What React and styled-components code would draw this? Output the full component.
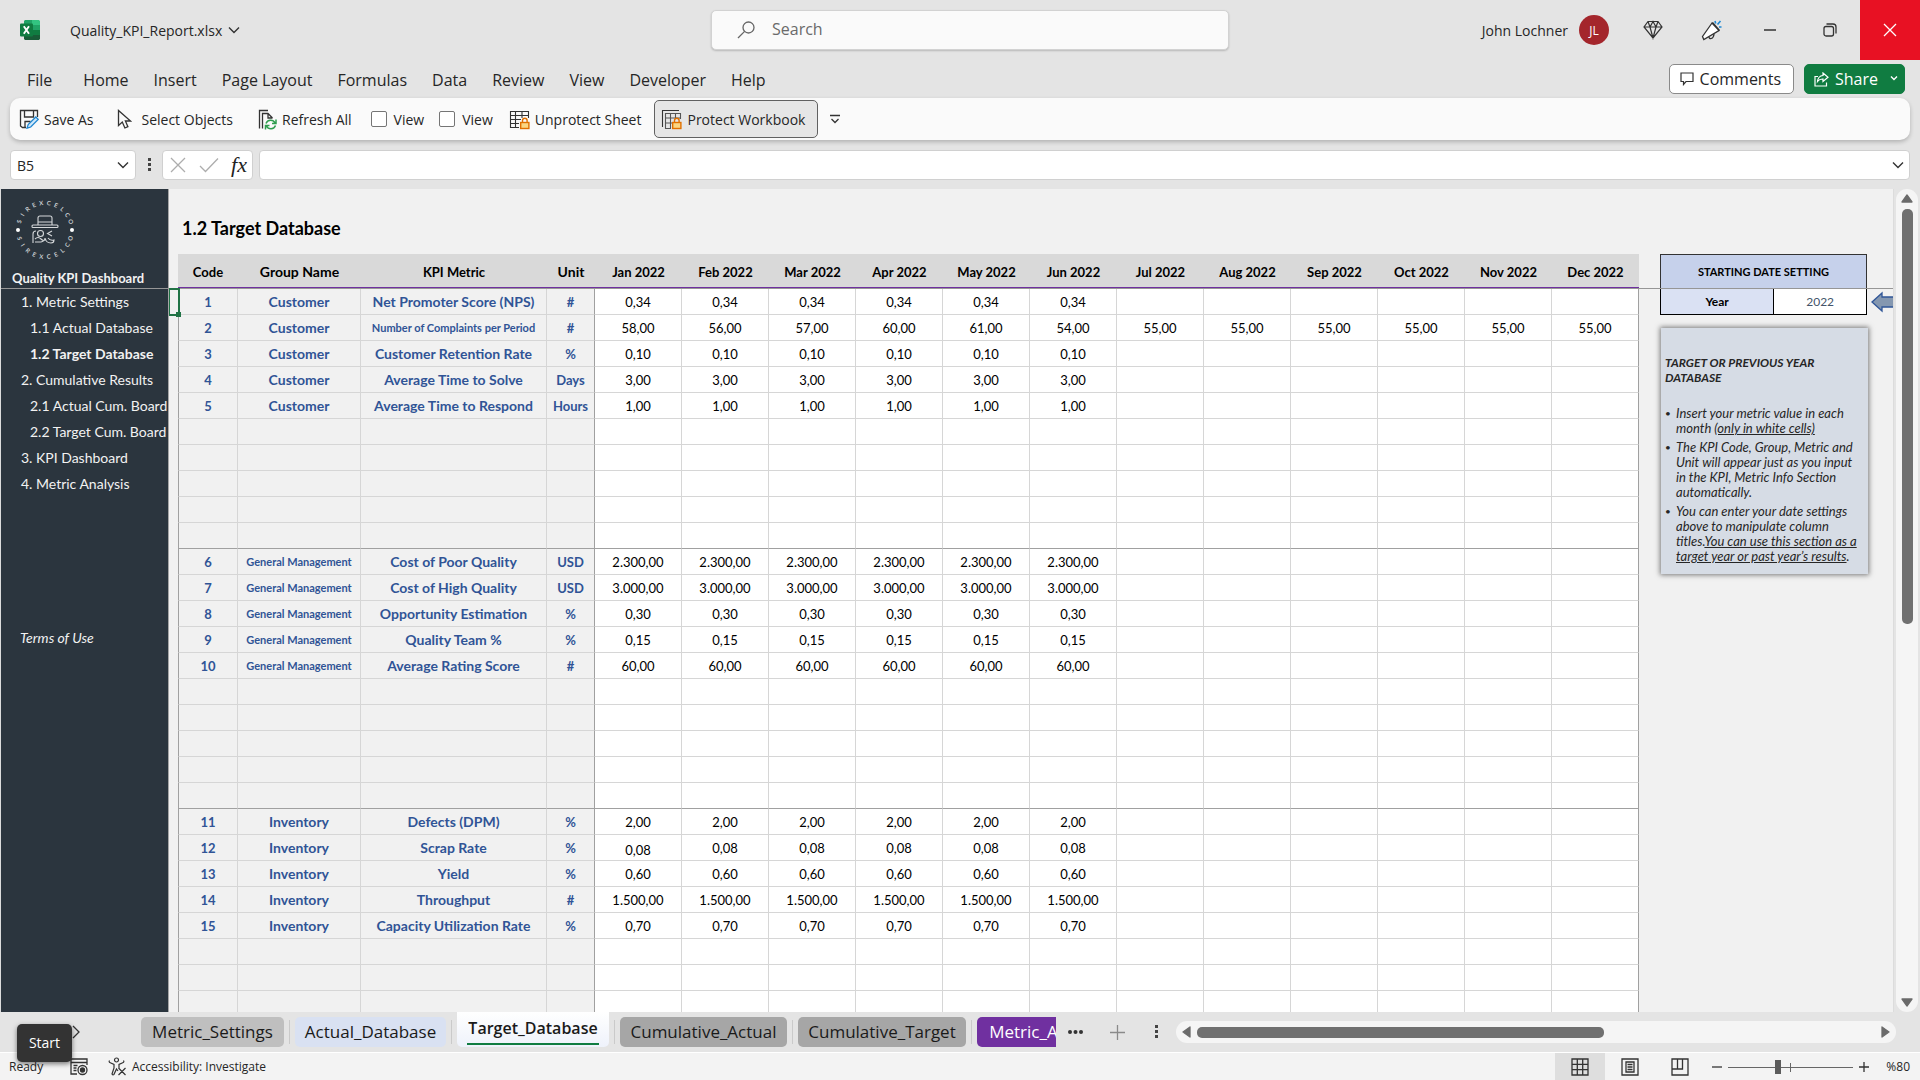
import React from "react";
import styled, { createGlobalStyle, css } from "styled-components";

const GlobalStyle = createGlobalStyle`
  * {
    box-sizing: border-box;
  }
  body {
    margin: 0;
    background: #e4e4e4;
    color: #262626;
    font-family: "Open Sans", "Noto Sans", sans-serif;
    font-size: 14px;
  }
  button, input, select {
    font: inherit;
    color: inherit;
  }
  button {
    border: 0;
    padding: 0;
    background: none;
  }
  a {
    color: inherit;
    text-decoration: none;
  }
`;

const Window = styled.div`
  display: flex;
  flex-direction: column;
  height: 100vh;
  overflow: hidden;
`;

/* ---------- title bar ---------- */

const TitleBar = styled.header`
  display: grid;
  grid-template-columns: 1fr 518px 1fr;
  height: 60px;
  flex: none;
  padding-left: 20px;
`;
const TitleLeft = styled.div`
  display: flex;
  align-items: center;
  gap: 30px;
`;
const FileButton = styled.button`
  display: flex;
  align-items: center;
  gap: 6px;
`;
const SearchBox = styled.label`
  display: flex;
  align-items: center;
  align-self: center;
  gap: 15px;
  height: 40px;
  padding: 0 25px;
  background: #fafafa;
  border: 1px solid #d2d2d2;
  border-radius: 5px;
  box-shadow: 0 1px 2px rgba(0, 0, 0, 0.2);
`;
const SearchInput = styled.input`
  flex: 1;
  min-width: 0;
  padding: 0 2px 2px;
  border: 0;
  outline: 0;
  background: none;
  font-size: 16px;
  &::placeholder {
    color: #6a6a6a;
    opacity: 1;
  }
`;
const TitleRight = styled.div`
  display: flex;
  align-items: center;
  justify-content: flex-end;
`;
const Avatar = styled.span`
  display: flex;
  align-items: center;
  justify-content: center;
  width: 30px;
  height: 30px;
  margin: 0 15px 0 11px;
  border-radius: 50%;
  background: #a4262c;
  color: #fff;
  font-size: 12px;
`;
const WindowButton = styled.button`
  display: flex;
  align-items: center;
  justify-content: center;
  width: ${p => p.$width || 60}px;
  height: 60px;
  ${p =>
    p.$close &&
    css`
      background: #e81123;
    `}
`;

/* ---------- ribbon ---------- */

const MenuBar = styled.nav`
  display: flex;
  align-items: center;
  height: 38px;
  flex: none;
  padding: 0 15px 0 27px;
`;
const MenuLink = styled.a`
  margin-right: ${p => (p.$first ? 31 : 25)}px;
  padding-top: 2px;
  font-size: 16px;
`;
const MenuActions = styled.div`
  display: flex;
  gap: 10px;
  margin-left: auto;
`;
const ActionButton = styled.button`
  display: flex;
  align-items: center;
  gap: 6px;
  height: 30px;
  padding: 0 12px 0 10px;
  border: 1px solid #8a8a8a;
  border-radius: 5px;
  background: #fff;
  font-size: 16px;
  ${p =>
    p.$primary &&
    css`
      padding: 0 6px 0 9px;
      border-color: #107c41;
      background: #107c41;
      color: #fff;
    `}
`;
const ActionText = styled.span`
  margin-right: ${p => (p.$wide ? 6 : 0)}px;
`;
const Ribbon = styled.div`
  display: flex;
  align-items: center;
  height: 42px;
  flex: none;
  margin: 0 10px;
  padding-left: 9px;
  border-radius: 10px;
  background: #fafafa;
  box-shadow: 0 2px 4px rgba(0, 0, 0, 0.22);
`;
const Tool = styled.button`
  display: flex;
  align-items: center;
  gap: ${p => p.$gap || 5}px;
  margin-right: ${p => p.$after || 0}px;
`;
const CheckTool = styled.label`
  display: flex;
  align-items: center;
  gap: 7px;
  margin-right: ${p => p.$after}px;
`;
const CheckBox = styled.input`
  appearance: none;
  width: 16px;
  height: 16px;
  margin: 0;
  border: 1px solid #757575;
  border-radius: 2px;
  background: #fff;
`;
const ActiveTool = styled(Tool)`
  height: 38px;
  padding: 0 12px 0 6px;
  border: 1px solid #616161;
  border-radius: 5px;
  background: #e6e6e6;
`;

/* ---------- formula bar ---------- */

const FormulaBar = styled.div`
  display: flex;
  height: 30px;
  flex: none;
  margin: 10px 10px 9px;
`;
const field = css`
  display: flex;
  align-items: center;
  border: 1px solid #d0d0d0;
  border-radius: 4px;
  background: #fff;
`;
const NameBox = styled.label`
  ${field}
  width: 126px;
  padding: 0 6px;
`;
const NameInput = styled.input`
  flex: 1;
  min-width: 0;
  padding: 0;
  border: 0;
  outline: 0;
  background: none;
`;
const Dots = styled.div`
  display: flex;
  align-items: center;
  justify-content: center;
  width: 26px;
`;
const FormulaTools = styled.div`
  ${field}
  width: 91px;
  justify-content: space-between;
  padding: 0 5px 0 7px;
`;
const Fx = styled.button`
  font-family: "Liberation Serif", serif;
  font-style: italic;
  font-size: 22px;
  line-height: 24px;
  color: #222;
`;
const FormulaField = styled.label`
  ${field}
  flex: 1;
  margin-left: 6px;
  padding: 0 5px 0 8px;
`;

/* ---------- sheet ---------- */

const Workspace = styled.div`
  display: flex;
  flex: 1;
  min-height: 0;
`;
const Sheet = styled.main`
  position: relative;
  display: flex;
  flex: 1;
  min-width: 0;
  overflow: hidden;
  border: solid #dcdcdc;
  border-width: 0 1px 0 1px;
  background: #f1f1f1;
  font-family: Lato, Carlito, sans-serif;
  font-size: 13px;
`;
/* marks the frozen rows, runs over every column */
const FreezeLine = styled.div`
  position: absolute;
  top: 99px;
  left: 0;
  right: 0;
  height: 1px;
  background: #969696;
`;
const Sidebar = styled.aside`
  width: 168px;
  flex: none;
  overflow: hidden;
  border-right: 1px solid #a6a6a6;
  background: #2b353e;
  color: #f2f2f2;
`;
const SidebarHead = styled.div`
  display: flex;
  flex-direction: column;
  justify-content: space-between;
  height: 100px;
  padding: 8px 0 1px 11px;
`;
const Brand = styled.strong`
  line-height: 20px;
`;
const SideLink = styled.a`
  display: block;
  padding-left: ${p => (p.$sub ? 29 : 20)}px;
  font-size: 14px;
  font-weight: ${p => (p.$current ? "bold" : "normal")};
  line-height: 26px;
  white-space: nowrap;
`;
const Terms = styled(SideLink)`
  margin-top: 128px;
  padding-left: 19px;
  font-style: italic;
`;
const Gutter = styled.div`
  width: 9px;
  flex: none;
`;
/* selection frame of cell B5, lies over its neighbours */
const Selection = styled.div`
  position: absolute;
  z-index: 1;
  top: 99px;
  left: 168px;
  width: 11px;
  height: 28px;
  border: 2px solid #217346;
  border-left-width: 1px;
  &::after {
    content: "";
    position: absolute;
    right: -3px;
    bottom: -3px;
    width: 5px;
    height: 5px;
    background: #217346;
  }
`;
const Content = styled.section`
  flex: 1;
  min-width: 0;
`;
const SheetTitle = styled.h1`
  height: 65px;
  margin: 0;
  padding: 29px 0 0 4px;
  color: #000;
  font-size: 18px;
  line-height: 20px;
`;
const Grid = styled.table`
  width: 100%;
  table-layout: fixed;
  border-spacing: 0;
  text-align: center;
`;
const HeadCell = styled.th`
  height: 35px;
  padding: 3px 0 0;
  border-bottom: 2px solid #7030a0;
  background: #d9d9d9;
  color: #000;
  line-height: 20px;
  font-size: ${p => (p.$wide ? 14 : 13)}px;
`;
const Cell = styled.td`
  height: 26px;
  padding: 0;
  border: solid #d6d6d6;
  border-width: 0 1px 1px 0;
  background: #fff;
  color: #000;
  line-height: 20px;
  vertical-align: ${p => (p.$low ? "bottom" : "middle")};
  ${p =>
    p.$info &&
    css`
      background: #f1f1f1;
      color: #305496;
      font-size: ${p.$size || 13}px;
      font-weight: bold;
    `}
  ${p =>
    p.$first &&
    css`
      border-left: 1px solid #a0a0a0;
    `}
  ${p =>
    p.$edge &&
    css`
      border-right-color: #a0a0a0;
    `}
  ${p =>
    p.$last &&
    css`
      border-bottom-color: #a0a0a0;
    `}
`;
const SidePanel = styled.aside`
  width: 207px;
  flex: none;
  margin: 65px 26px 0 21px;
`;
const DateTable = styled.table`
  width: 100%;
  table-layout: fixed;
  border-collapse: collapse;
  color: #000;
  font-size: 12px;
`;
const LabelCol = styled.col`
  width: 55%;
`;
const DateHead = styled.th`
  height: 34px;
  padding: 0;
  border: 1px solid #333;
  background: #c6d1eb;
  font-size: 11px;
`;
const DateLabel = styled.th`
  height: 26px;
  padding: 0;
  border: 1px solid #000;
  background: #dae1f3;
`;
const DateValue = styled.td`
  padding: 0;
  border: 1px solid #000;
  background: #fff;
  color: #44546a;
  text-align: center;
`;
const ArrowMark = styled.svg`
  position: absolute;
  top: 102px;
  right: 0;
`;
const Note = styled.div`
  margin: 13px -1px 0 1px;
  height: 246px;
  padding: 27px 7px 0 4px;
  background: #d6dce5;
  box-shadow: 0 0 5px 1px rgba(0, 0, 0, 0.5);
  color: #262626;
  font-size: 13px;
  font-style: italic;
  line-height: 15px;
`;
const NoteTitle = styled.h2`
  margin: 0 0 21px;
  font-size: 12px;
  line-height: 15px;
`;
const NoteList = styled.ul`
  display: flex;
  flex-direction: column;
  gap: 4px;
  margin: 0;
  padding: 0;
  list-style: none;
`;
const NoteItem = styled.li`
  display: flex;
  &::before {
    content: "•";
    width: 11px;
    flex: none;
    font-size: 10px;
  }
`;
const VScroll = styled.div`
  display: flex;
  flex-direction: column;
  align-items: center;
  width: 22px;
  flex: none;
  margin: 0 2px;
  padding: 5px 0;
  gap: 6px;
  border-radius: 11px;
  background: #f5f5f5;
`;
const VTrack = styled.div`
  flex: 1;
`;
const VThumb = styled.div`
  width: 11px;
  height: 53%;
  border-radius: 5px;
  background: #707070;
`;

/* ---------- sheet tabs ---------- */

const TabBar = styled.div`
  display: flex;
  align-items: center;
  height: 40px;
  flex: none;
  padding: 0 24px 0 141px;
  position: relative;
`;
const TabStrip = styled.div`
  display: flex;
  align-items: center;
  align-self: stretch;
  width: 915px;
  overflow: hidden;
`;
const SheetTab = styled.button`
  flex: none;
  width: ${p => p.$width}px;
  height: 30px;
  border-radius: 5px;
  background: ${p => p.$color};
  color: ${p => p.$text || "#1a1a1a"};
  font-size: 17px;
  line-height: 30px;
  text-align: center;
`;
const ActiveTab = styled(SheetTab)`
  align-self: flex-start;
  height: 35px;
  padding: 0 10px;
  border-radius: 0 0 5px 5px;
  background: linear-gradient(#fff, #eef2fb);
  font-size: 16px;
  font-weight: 600;
`;
const ActiveLabel = styled.span`
  display: block;
  border-bottom: 2px solid #107c41;
  line-height: 29px;
`;
const TabGap = styled.span`
  width: 1px;
  height: 24px;
  flex: none;
  margin: 0 5px;
  background: #cacaca;
`;
const TabTools = styled.div`
  display: flex;
  align-items: center;
  justify-content: space-between;
  width: 92px;
  margin: 0 16px 0 12px;
`;
const HScroll = styled.div`
  display: flex;
  align-items: center;
  gap: 6px;
  flex: 1;
  height: 22px;
  padding: 0 6px;
  border-radius: 11px;
  background: #f5f5f5;
`;
const HTrack = styled.div`
  flex: 1;
`;
const HThumb = styled.div`
  width: 60%;
  height: 11px;
  border-radius: 5px;
  background: #707070;
`;
const NextSheet = styled.button`
  position: absolute;
  left: 72px;
  top: 12px;
`;
const StartTip = styled.div`
  position: absolute;
  z-index: 1;
  left: 17px;
  top: 12px;
  width: 55px;
  height: 38px;
  border-radius: 5px;
  background: #333;
  box-shadow: 0 2px 5px rgba(0, 0, 0, 0.5);
  color: #fff;
  line-height: 37px;
  text-align: center;
`;

/* ---------- status bar ---------- */

const StatusBar = styled.footer`
  display: flex;
  align-items: center;
  height: 28px;
  flex: none;
  padding: 0 10px 0 9px;
  border-top: 1px solid #fff;
  background: #f3f3f3;
  font-size: 12px;
`;
const StatusText = styled.span`
  width: 61px;
`;
const StatusButton = styled.button`
  display: flex;
  align-items: center;
  gap: 5px;
  margin-right: 20px;
`;
const Views = styled.div`
  display: flex;
  align-self: stretch;
  margin-left: auto;
`;
const ViewButton = styled.button`
  display: flex;
  align-items: center;
  justify-content: center;
  width: 50px;
  background: ${p => (p.$active ? "#dedede" : "none")};
`;
const Zoom = styled.div`
  display: flex;
  align-items: center;
  gap: 6px;
  margin-left: 7px;
`;
const ZoomSlider = styled.input`
  appearance: none;
  width: 125px;
  height: 16px;
  margin: 0;
  background: linear-gradient(#666, #666) 62px 4px / 1px 9px no-repeat,
    linear-gradient(#666, #666) 0 8px / 100% 1px no-repeat;
  &::-webkit-slider-thumb {
    appearance: none;
    width: 6px;
    height: 14px;
    background: #5c5c5c;
  }
`;
const ZoomValue = styled.span`
  margin-left: 11px;
`;

/* ---------- icons ---------- */

const Icon = ({ size = 20, w = size, h = size, children, ...rest }) => (
  <svg
    width={w}
    height={h}
    viewBox={`0 0 ${w} ${h}`}
    fill="none"
    stroke="#333"
    strokeWidth="1.3"
    {...rest}
  >
    {children}
  </svg>
);

const Chevron = ({ w = 12, color = "#333" }) => (
  <Icon w={w} h={8} stroke={color} strokeWidth="1.4">
    <path d={`M1 1.5 L${w / 2} ${w / 2 + 0.5} L${w - 1} 1.5`} />
  </Icon>
);

const ExcelIcon = () => (
  <Icon size={20} stroke="none">
    <path d="M5 0h8v5H4V1z" fill="#21a366" />
    <path d="M12 0h7l1 1v4h-8z" fill="#33c481" />
    <path d="M4 5h8v5H4z" fill="#107c41" />
    <path d="M12 5h8v5h-8z" fill="#21a366" />
    <path d="M4 10h8v5H4z" fill="#185c37" />
    <path d="M12 10h8v5h-8z" fill="#107c41" />
    <path d="M4 15h16v4l-1 1H5l-1-1z" fill="#185c37" />
    <rect y="3.5" width="13" height="13" rx="1" fill="#107c41" />
    <path d="M3.8 6.3 9 13.7M9 6.3l-5.2 7.4" stroke="#fff" strokeWidth="1.9" />
  </Icon>
);

const SearchIcon = () => (
  <Icon size={18} stroke="#666" strokeWidth="1.3">
    <circle cx="11.5" cy="6.5" r="5.5" />
    <path d="M7.6 10.4 1 17" />
  </Icon>
);

const DiamondIcon = () => (
  <Icon size={20} strokeWidth="1.2">
    <path d="M5 1.5h10l4 5.5-9 11L1 7zM1 7h18M5 1.5 7 7l3 11 3-11 2-5.5M7 7l3-5.5L13 7" />
  </Icon>
);

const MegaphoneIcon = () => (
  <Icon size={21}>
    <path d="M11 3 1.5 16.5l1.3 3L18 10.5zM11.5 2.5l7 8" fill="#fff" />
    <path d="M8 17c0 2.5 4.5 2.5 5-3" />
    <path d="M14 1l.7 2.5M19.5 1 16.5 4.5M18 7h2.5" stroke="#1e88d2" strokeWidth="1.6" />
  </Icon>
);

const SaveAsIcon = () => (
  <Icon size={20}>
    <path d="M18.5 8V1.5h-17V17l2 1.5H7M5.5 1.5V8h9V1.5M6 18v-5.5h5.5" />
    <path d="M8 19.2l1.2-3.7L16.8 8l2.4 2.4-7.5 7.6z" fill="#cfe8fa" stroke="#1f86d0" />
  </Icon>
);

const PointerIcon = () => (
  <Icon w={15} h={20}>
    <path d="M1.5 1.5v15l3.8-3.5 2.6 6 3-1.3L8.4 12H13.5z" />
  </Icon>
);

const RefreshIcon = () => (
  <Icon w={19} h={21}>
    <path d="M1.5 19.5v-18H10M4.5 19.5v-15H10l4.5 4.5M10 4.5V9h4.5" />
    <path
      d="M8 14.5c1.5-4 7-4.5 9-.5M18 10.5v4h-4M17.5 16.5c-1.500 4-7 4.500-9 .5M7.500 20.500v-4h4"
      stroke="#2f9e4f"
      strokeWidth="1.5"
    />
  </Icon>
);

const LockBadge = () => (
  <g stroke="#e07000" strokeWidth="1.4">
    <path d="M13.5 13.5v-2a2.3 2.3 0 0 1 4.6 0v2" />
    <rect x="11.7" y="13.5" width="8.2" height="6" fill="#fbd682" />
  </g>
);

const SheetLockIcon = () => (
  <Icon size={21} strokeWidth="1.1">
    <path d="M10 18.5H1.5v-16h18V9M1.5 6.5h18M1.5 10.5H12M1.5 14.5H10M6.5 2.5v16M13 2.5V9" />
    <LockBadge />
  </Icon>
);

const BookLockIcon = () => (
  <Icon size={21} strokeWidth="1.1">
    <path d="M1.5 18V1.5H18" />
    <path d="M10 19.5H4.5v-15h15V10M4.5 9h15M4.5 14H11M9.5 4.5v15M14.5 4.5V9" stroke="#555" />
    <LockBadge />
  </Icon>
);

const LOGO_NAME = "SIREXCELCO";

const Logo = () => {
  const letters = side =>
    LOGO_NAME.split("").map((letter, i) => {
      const turn = (-72 + i * 16) * side;
      return (
        <text
          key={side + "-" + i}
          y={side > 0 ? -25 : 29}
          transform={`rotate(${turn})`}
          textAnchor="middle"
        >
          {letter}
        </text>
      );
    });

  return (
    <svg
      width="66"
      height="66"
      viewBox="-33 -33 66 66"
      fill="#c9cdd0"
      fontFamily="Lato, sans-serif"
      fontSize="6"
      fontWeight="bold"
      role="img"
      aria-label="Sirexcelco"
    >
      {letters(1)}
      {letters(-1)}
      <circle cx="-27" cy="0" r="2" fill="#fff" />
      <circle cx="27" cy="0" r="2" fill="#fff" />
      <g fill="none" stroke="#d5d8da" strokeWidth="1.1">
        <path d="M-7-5v-7q0-2 2-2h10q2 0 2 2v7M-7-8H7" />
        <rect x="-13" y="-5" width="26" height="2.5" rx="1" />
        <circle cx="-4.5" cy="3.5" r="3" />
        <path d="M-12 13V4q0-3 3-3M7 1 2.5 3.5 7 6M-10 9q3-3 6 0t5 0M-10 12h6q4-1 4-4 1 5 6 5 3 0 3-3-4 1-6-2" />
      </g>
    </svg>
  );
};

const Kebab = () => (
  <Icon w={8} h={16} stroke="none" fill="#444">
    <rect x="3" y="1" width="3" height="3" />
    <rect x="3" y="6" width="3" height="3" />
    <rect x="3" y="11" width="3" height="3" />
  </Icon>
);

const Triangle = ({ points, w, h }) => (
  <Icon w={w} h={h} stroke="#6b6b6b" strokeLinejoin="round" fill="#6b6b6b">
    <polygon points={points} />
  </Icon>
);

/* ---------- data ---------- */

const MENU = ["File", "Home", "Insert", "Page Layout", "Formulas", "Data", "Review", "View", "Developer", "Help"];

const LINKS = [
  { text: "1. Metric Settings" },
  { text: "1.1 Actual Database", sub: true },
  { text: "1.2 Target Database", sub: true, current: true },
  { text: "2. Cumulative Results" },
  { text: "2.1 Actual Cum. Board", sub: true },
  { text: "2.2 Target Cum. Board", sub: true },
  { text: "3. KPI Dashboard" },
  { text: "4. Metric Analysis" }
];

const MONTHS = ["Jan", "Feb", "Mar", "Apr", "May", "Jun", "Jul", "Aug", "Sep", "Oct", "Nov", "Dec"];
const ROWS_PER_GROUP = 10;

const half = value => Array(6).fill(value);

const GROUPS = [
  {
    name: "Customer",
    rows: [
      [1, "Net Promoter Score (NPS)", "#", half("0,34")],
      [
        2,
        "Number of Complaints per Period",
        "#",
        ["58,00", "56,00", "57,00", "60,00", "61,00", "54,00"].concat(half("55,00"))
      ],
      [3, "Customer Retention Rate", "%", half("0,10")],
      [4, "Average Time to Solve", "Days", half("3,00")],
      [5, "Average Time to Respond", "Hours", half("1,00")]
    ]
  },
  {
    name: "General Management",
    rows: [
      [6, "Cost of Poor Quality", "USD", half("2.300,00")],
      [7, "Cost of High Quality", "USD", half("3.000,00")],
      [8, "Opportunity Estimation", "%", half("0,30")],
      [9, "Quality Team %", "%", half("0,15")],
      [10, "Average Rating Score", "#", half("60,00")]
    ]
  },
  {
    name: "Inventory",
    rows: [
      [11, "Defects (DPM)", "%", half("2,00")],
      [12, "Scrap Rate", "%", half("0,08")],
      [13, "Yield", "%", half("0,60")],
      [14, "Throughput", "#", half("1.500,00")],
      [15, "Capacity Utilization Rate", "%", half("0,70")]
    ]
  }
];

const MetricRow = ({ group, row, last }) => {
  const [code, metric, unit, values] = row || ["", "", "", []];
  return (
    <tr>
      <Cell $info $first $last={last}>{code}</Cell>
      <Cell $info $last={last} $size={group.length > 12 ? 11 : 14}>{row ? group : ""}</Cell>
      <Cell $info $last={last} $size={metric.length > 26 ? 11 : 14}>{metric}</Cell>
      <Cell $info $edge $last={last}>{unit}</Cell>
      {MONTHS.map((month, i) => (
        <Cell key={month} $last={last} $edge={i === 11} $low={code === 12 && i === 0}>
          {values[i]}
        </Cell>
      ))}
    </tr>
  );
};

const MetricTable = () => (
  <Grid>
    <colgroup>
      <col style={{ width: "60px" }} />
      <col style={{ width: "123px" }} />
      <col style={{ width: "186px" }} />
      <col style={{ width: "48px" }} />
      {MONTHS.map(month => (
        <col key={month} />
      ))}
    </colgroup>
    <thead>
      <tr>
        <HeadCell>Code</HeadCell>
        <HeadCell $wide>Group Name</HeadCell>
        <HeadCell>KPI Metric</HeadCell>
        <HeadCell $wide>Unit</HeadCell>
        {MONTHS.map(month => (
          <HeadCell key={month}>{month} 2022</HeadCell>
        ))}
      </tr>
    </thead>
    <tbody>
      {GROUPS.map(group =>
        Array.from({ length: ROWS_PER_GROUP }, (_, i) => (
          <MetricRow
            key={group.name + i}
            group={group.name}
            row={group.rows[i]}
            last={i === ROWS_PER_GROUP - 1}
          />
        ))
      )}
    </tbody>
  </Grid>
);

const App = () => {
  return (
    <Window>
      <GlobalStyle />

      <TitleBar>
        <TitleLeft>
          <ExcelIcon />
          <FileButton>
            Quality_KPI_Report.xlsx
            <Chevron />
          </FileButton>
        </TitleLeft>
        <SearchBox>
          <SearchIcon />
          <SearchInput type="search" placeholder="Search" aria-label="Search" />
        </SearchBox>
        <TitleRight>
          <span>John Lochner</span>
          <Avatar>JL</Avatar>
          <WindowButton $width={58} aria-label="Premium"><DiamondIcon /></WindowButton>
          <WindowButton $width={58} aria-label="What's new"><MegaphoneIcon /></WindowButton>
          <WindowButton aria-label="Minimize">
            <Icon size={14}><path d="M1 7h12" strokeWidth="1.5" /></Icon>
          </WindowButton>
          <WindowButton aria-label="Restore">
            <Icon size={14}>
              <rect x="1" y="3.5" width="9.5" height="9.5" rx="2" />
              <path d="M3.5 1H10q3 0 3 3v6.5" />
            </Icon>
          </WindowButton>
          <WindowButton $close aria-label="Close">
            <Icon size={14} stroke="#fff"><path d="M1 1l12 12M13 1 1 13" /></Icon>
          </WindowButton>
        </TitleRight>
      </TitleBar>

      <MenuBar>
        {MENU.map((item, i) => (
          <MenuLink key={item} href="#" $first={i === 0}>{item}</MenuLink>
        ))}
        <MenuActions>
          <ActionButton>
            <Icon size={14} strokeWidth="1.2">
              <path d="M1 1h12v8.5H6L3.5 12.5V9.5H1z" />
            </Icon>
            <ActionText>Comments</ActionText>
          </ActionButton>
          <ActionButton $primary>
            <Icon size={15} stroke="#fff" strokeWidth="1.2">
              <path d="M4 4.5H1V14h11.5v-3.5M9 1l5 4.2L9 9.5V7Q5.5 6.8 3.5 9.5 4 4 9 3.5z" />
            </Icon>
            <ActionText $wide>Share</ActionText>
            <Chevron w={8} color="#fff" />
          </ActionButton>
        </MenuActions>
      </MenuBar>

      <Ribbon>
        <Tool $after={24}><SaveAsIcon />Save As</Tool>
        <Tool $gap={9} $after={25}><PointerIcon />Select Objects</Tool>
        <Tool $after={19}><RefreshIcon />Refresh All</Tool>
        <CheckTool $after={15}><CheckBox type="checkbox" />View</CheckTool>
        <CheckTool $after={16}><CheckBox type="checkbox" />View</CheckTool>
        <Tool $after={13}><SheetLockIcon />Unprotect Sheet</Tool>
        <ActiveTool $after={12}><BookLockIcon />Protect Workbook</ActiveTool>
        <Tool aria-label="Customize toolbar">
          <Icon size={10}><path d="M0 1.5h10M1.5 5 5 8.5 8.5 5" /></Icon>
        </Tool>
      </Ribbon>

      <FormulaBar>
        <NameBox>
          <NameInput defaultValue="B5" aria-label="Name box" />
          <Chevron />
        </NameBox>
        <Dots><Kebab /></Dots>
        <FormulaTools>
          <Icon size={16} stroke="#adadad"><path d="M1 1l14 14M15 1 1 15" /></Icon>
          <Icon w={20} h={16} stroke="#adadad"><path d="M1 9l5.5 5.5L19 1.5" /></Icon>
          <Fx>fx</Fx>
        </FormulaTools>
        <FormulaField>
          <NameInput aria-label="Formula" />
          <Chevron />
        </FormulaField>
      </FormulaBar>

      <Workspace>
        <Sheet>
          <Sidebar>
            <SidebarHead>
              <Logo />
              <Brand>Quality KPI Dashboard</Brand>
            </SidebarHead>
            {LINKS.map(link => (
              <SideLink key={link.text} href="#" $sub={link.sub} $current={link.current}>
                {link.text}
              </SideLink>
            ))}
            <Terms href="#">Terms of Use</Terms>
          </Sidebar>
          <Gutter />
          <Content>
            <SheetTitle>1.2 Target Database</SheetTitle>
            <MetricTable />
          </Content>
          <SidePanel>
            <DateTable>
              <colgroup>
                <LabelCol />
                <col />
              </colgroup>
              <thead>
                <tr><DateHead colSpan={2}>STARTING DATE SETTING</DateHead></tr>
              </thead>
              <tbody>
                <tr>
                  <DateLabel scope="row">Year</DateLabel>
                  <DateValue>2022</DateValue>
                </tr>
              </tbody>
            </DateTable>
            <Note>
              <NoteTitle>TARGET OR PREVIOUS YEAR DATABASE</NoteTitle>
              <NoteList>
                <NoteItem>
                  <span>
                    Insert your metric value in each month <u>(only in white cells)</u>
                  </span>
                </NoteItem>
                <NoteItem>
                  <span>
                    The KPI Code, Group, Metric and Unit will appear just as you input in
                    the KPI, Metric Info Section automatically.
                  </span>
                </NoteItem>
                <NoteItem>
                  <span>
                    You can enter your date settings above to manipulate column titles.
                    <u>You can use this section as a target year or past year’s results</u>.
                  </span>
                </NoteItem>
              </NoteList>
            </Note>
          </SidePanel>
          <FreezeLine />
          <Selection />
          <ArrowMark width="22" height="22" viewBox="0 0 22 22">
            <path d="M1 11 11 2v4h12v10H11v4z" fill="#8497b0" stroke="#2f5597" strokeWidth="1.3" />
          </ArrowMark>
        </Sheet>
        <VScroll>
          <Triangle w={12} h={9} points="6,1 11,8 1,8" />
          <VTrack><VThumb /></VTrack>
          <Triangle w={12} h={9} points="1,1 11,1 6,8" />
        </VScroll>
      </Workspace>

      <TabBar>
        <NextSheet aria-label="Next sheet">
          <Icon w={9} h={14}><path d="M1 1l6 6-6 6" /></Icon>
        </NextSheet>
        <StartTip role="tooltip">Start</StartTip>
        <TabStrip>
          <SheetTab $width={143} $color="#bfbfbf">Metric_Settings</SheetTab>
          <TabGap />
          <SheetTab $width={151} $color="#d9e1f2">Actual_Database</SheetTab>
          <TabGap />
          <ActiveTab $width={152}><ActiveLabel>Target_Database</ActiveLabel></ActiveTab>
          <TabGap />
          <SheetTab $width={167} $color="#a6a6a6">Cumulative_Actual</SheetTab>
          <TabGap />
          <SheetTab $width={168} $color="#a6a6a6">Cumulative_Target</SheetTab>
          <TabGap />
          <SheetTab $width={146} $color="#7030a0" $text="#fff">Metric_Analysis</SheetTab>
        </TabStrip>
        <TabTools>
          <Icon w={15} h={4} stroke="none" fill="#333">
            <circle cx="2" cy="2" r="2" />
            <circle cx="7.5" cy="2" r="2" />
            <circle cx="13" cy="2" r="2" />
          </Icon>
          <Icon size={15} stroke="#8a8a8a"><path d="M0 7.5h15M7.5 0v15" /></Icon>
          <Kebab />
        </TabTools>
        <HScroll>
          <Triangle w={9} h={12} points="8,1 8,11 1,6" />
          <HTrack><HThumb /></HTrack>
          <Triangle w={9} h={12} points="1,1 1,11 8,6" />
        </HScroll>
      </TabBar>

      <StatusBar>
        <StatusText>Ready</StatusText>
        <StatusButton aria-label="Record macro">
          <Icon size={18}>
            <path d="M7 16H1V1h16v6M1 4.5h16M3.5 7.5h4M3.5 10h3M3.5 12.5h3" />
            <circle cx="12.5" cy="12" r="4.5" />
            <circle cx="12.5" cy="12" r="2" fill="#333" />
          </Icon>
        </StatusButton>
        <StatusButton>
          <Icon size={19} strokeWidth="1.2">
            <circle cx="8.5" cy="3" r="2" />
            <path d="M1.5 3.5q-1 1.5.8 2.3L6 7.5v3.5L4 17q.8 1.5 2 .3L8.5 12l1.5 2M15.5 3.5q1 1.5-.8 2.3L11 7.5V11M10.5 11l7 7M17.5 11l-7 7" />
          </Icon>
          Accessibility: Investigate
        </StatusButton>
        <Views>
          <ViewButton $active aria-label="Normal view">
            <Icon size={18}><path d="M1 1h16v16H1zM1 6.3h16M1 11.7h16M6.3 1v16M11.7 1v16" /></Icon>
          </ViewButton>
          <ViewButton aria-label="Page layout">
            <Icon size={18}><path d="M1 1h16v16H1zM5 4h8v10H5zM6.5 6.5h5M6.5 9h5M6.5 11.5h5" /></Icon>
          </ViewButton>
          <ViewButton aria-label="Page break preview">
            <Icon size={18}><path d="M1 1h16v16H1zM1 11h10.5V1M6.5 1v10" /></Icon>
          </ViewButton>
        </Views>
        <Zoom>
          <Icon size={10}><path d="M0 5h10" /></Icon>
          <ZoomSlider type="range" min="10" max="190" defaultValue="81" aria-label="Zoom" />
          <Icon size={10}><path d="M0 5h10M5 0v10" /></Icon>
          <ZoomValue>%80</ZoomValue>
        </Zoom>
      </StatusBar>
    </Window>
  );
};

export default App;
